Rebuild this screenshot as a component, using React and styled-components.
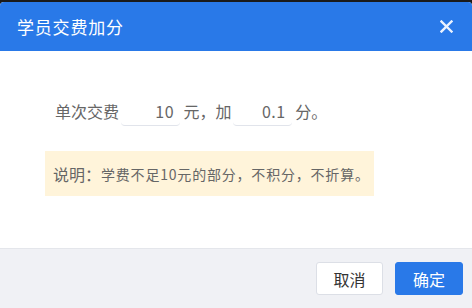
import React from 'react';
import styled, { createGlobalStyle } from 'styled-components';

const GlobalStyle = createGlobalStyle`
  html, body {
    margin: 0;
    padding: 0;
    background: #1a1a1a;
  }
  body {
    font-family: "Microsoft YaHei", "Noto Sans CJK SC", "Noto Sans", sans-serif;
  }
`;

const Page = styled.div`
  width: 472px;
  height: 308px;
  padding-top: 2px;
  box-sizing: border-box;
  background: #1a1a1a;
`;

const Dialog = styled.div`
  display: flex;
  flex-direction: column;
  height: 306px;
  background: #fff;
  border-radius: 4px 4px 0 0;
  overflow: hidden;
`;

const Header = styled.div`
  display: flex;
  align-items: center;
  justify-content: space-between;
  height: 49px;
  padding: 0 19px 0 17px;
  background: #2979e8;
  color: #fff;
`;

const Title = styled.div`
  font-size: 17px;
  line-height: 20px;
  letter-spacing: 0.8px;
`;

const CloseBtn = styled.button`
  display: flex;
  align-items: center;
  justify-content: center;
  width: 14px;
  height: 14px;
  padding: 0;
  border: 0;
  background: none;
  cursor: pointer;
`;

const Body = styled.div`
  flex: 1;
  padding: 45px 0 0 45px;
`;

const Row = styled.div`
  display: flex;
  align-items: center;
  padding-left: 10px;
  font-size: 16px;
  color: #666;
`;

const Label = styled.span`
  margin-right: ${(p) => p.gap || 0}px;
  line-height: 20px;
`;

const NumInput = styled.input`
  width: 59px;
  height: 30px;
  box-sizing: border-box;
  padding: 0 6px;
  border: 0;
  border-bottom: 1px solid #e1e4eb;
  border-radius: 0 0 4px 4px;
  outline: none;
  background: transparent;
  font: inherit;
  font-size: 16px;
  letter-spacing: 0.5px;
  color: #666;
  text-align: right;
`;

const Notice = styled.div`
  display: flex;
  align-items: center;
  width: 329px;
  height: 45px;
  margin-top: 25px;
  padding-left: 8px;
  box-sizing: border-box;
  background: #fff4da;
  color: #666;
  font-size: 14px;
  letter-spacing: 0.8px;
`;

const NoticeLead = styled.span`
  font-size: 16px;
  letter-spacing: 0;
`;

const Footer = styled.div`
  display: flex;
  align-items: center;
  justify-content: flex-end;
  gap: 12px;
  height: 59px;
  padding-right: 9px;
  border-top: 1px solid #e4e6eb;
  background: #f0f1f5;
`;

const Button = styled.button`
  width: ${(p) => (p.primary ? 68 : 67)}px;
  height: 33px;
  padding: 0;
  border: 1px solid ${(p) => (p.primary ? '#2979e8' : '#dcdfe6')};
  border-radius: 3px;
  background: ${(p) => (p.primary ? '#2979e8' : '#fff')};
  color: ${(p) => (p.primary ? '#fff' : '#333')};
  font: inherit;
  font-size: 16px;
  cursor: pointer;
`;

export default function App() {
  return (
    <>
      <GlobalStyle />
      <Page>
        <Dialog>
          <Header>
            <Title>学员交费加分</Title>
            <CloseBtn aria-label="关闭">
              <svg width="13" height="13" viewBox="0 0 13 13">
                <path d="M1.5 1.5l10 10M11.5 1.5l-10 10" stroke="#eaf2ff" strokeWidth="2.4" strokeLinecap="square" />
              </svg>
            </CloseBtn>
          </Header>
          <Body>
            <Row>
              <Label gap={2}>单次交费</Label>
              <NumInput defaultValue="10" />
              <Label gap={1}>&nbsp;元，加</Label>
              <NumInput defaultValue="0.1" />
              <Label>&nbsp;分。</Label>
            </Row>
            <Notice>
              <NoticeLead>说明：</NoticeLead>
              学费不足10元的部分，不积分，不折算。
            </Notice>
          </Body>
          <Footer>
            <Button>取消</Button>
            <Button primary>确定</Button>
          </Footer>
        </Dialog>
      </Page>
    </>
  );
}
